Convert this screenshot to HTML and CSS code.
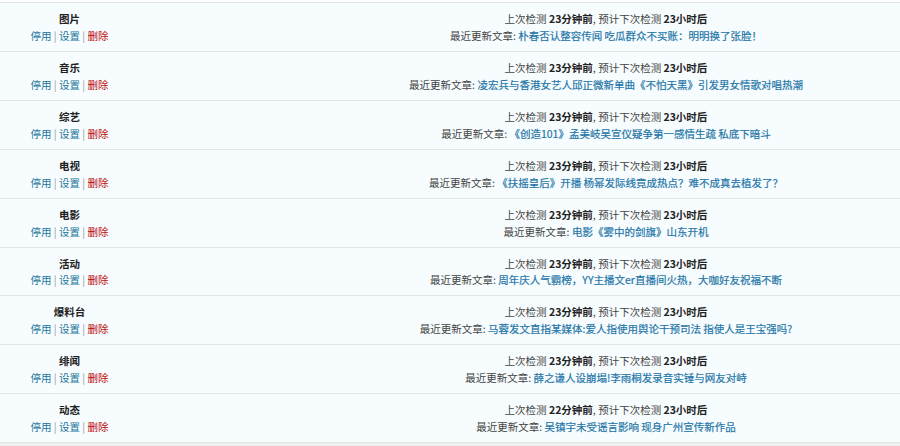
FILE: index.html
```html
<!DOCTYPE html>
<html lang="zh-CN">
<head>
    <meta charset="UTF-8">
    <meta name="viewport" content="width=device-width, initial-scale=1.0">
    <title>采集分类</title>
    <link rel="stylesheet" href="styles.css">
</head>
<body>
    <div class="page">
        <div class="feed-list">

            <div class="feed-row">
                <div class="feed-name">
                    <strong>图片</strong>
                    <div class="row-actions"><a href="#">停用</a> | <a href="#">设置</a> | <a href="#" class="delete">删除</a></div>
                </div>
                <div class="feed-desc"></div>
                <div class="feed-status">
                    <div>上次检测 <b>23分钟前</b>, 预计下次检测 <b>23小时后</b></div>
                    <div>最近更新文章: <a href="#" class="post">朴春否认整容传闻 吃瓜群众不买账：明明换了张脸！</a></div>
                </div>
            </div>

            <div class="feed-row">
                <div class="feed-name">
                    <strong>音乐</strong>
                    <div class="row-actions"><a href="#">停用</a> | <a href="#">设置</a> | <a href="#" class="delete">删除</a></div>
                </div>
                <div class="feed-desc"></div>
                <div class="feed-status">
                    <div>上次检测 <b>23分钟前</b>, 预计下次检测 <b>23小时后</b></div>
                    <div>最近更新文章: <a href="#" class="post">凌宏兵与香港女艺人邱正微新单曲《不怕天黑》引发男女情歌对唱热潮</a></div>
                </div>
            </div>

            <div class="feed-row">
                <div class="feed-name">
                    <strong>综艺</strong>
                    <div class="row-actions"><a href="#">停用</a> | <a href="#">设置</a> | <a href="#" class="delete">删除</a></div>
                </div>
                <div class="feed-desc"></div>
                <div class="feed-status">
                    <div>上次检测 <b>23分钟前</b>, 预计下次检测 <b>23小时后</b></div>
                    <div>最近更新文章: <a href="#" class="post">《创造101》孟美岐吴宣仪疑争第一感情生疏 私底下暗斗</a></div>
                </div>
            </div>

            <div class="feed-row">
                <div class="feed-name">
                    <strong>电视</strong>
                    <div class="row-actions"><a href="#">停用</a> | <a href="#">设置</a> | <a href="#" class="delete">删除</a></div>
                </div>
                <div class="feed-desc"></div>
                <div class="feed-status">
                    <div>上次检测 <b>23分钟前</b>, 预计下次检测 <b>23小时后</b></div>
                    <div>最近更新文章: <a href="#" class="post">《扶摇皇后》开播 杨幂发际线竟成热点？难不成真去植发了？</a></div>
                </div>
            </div>

            <div class="feed-row">
                <div class="feed-name">
                    <strong>电影</strong>
                    <div class="row-actions"><a href="#">停用</a> | <a href="#">设置</a> | <a href="#" class="delete">删除</a></div>
                </div>
                <div class="feed-desc"></div>
                <div class="feed-status">
                    <div>上次检测 <b>23分钟前</b>, 预计下次检测 <b>23小时后</b></div>
                    <div>最近更新文章: <a href="#" class="post">电影《雾中的剑旗》山东开机</a></div>
                </div>
            </div>

            <div class="feed-row">
                <div class="feed-name">
                    <strong>活动</strong>
                    <div class="row-actions"><a href="#">停用</a> | <a href="#">设置</a> | <a href="#" class="delete">删除</a></div>
                </div>
                <div class="feed-desc"></div>
                <div class="feed-status">
                    <div>上次检测 <b>23分钟前</b>, 预计下次检测 <b>23小时后</b></div>
                    <div>最近更新文章: <a href="#" class="post">周年庆人气霸榜，YY主播文er直播间火热，大咖好友祝福不断</a></div>
                </div>
            </div>

            <div class="feed-row">
                <div class="feed-name">
                    <strong>爆料台</strong>
                    <div class="row-actions"><a href="#">停用</a> | <a href="#">设置</a> | <a href="#" class="delete">删除</a></div>
                </div>
                <div class="feed-desc"></div>
                <div class="feed-status">
                    <div>上次检测 <b>23分钟前</b>, 预计下次检测 <b>23小时后</b></div>
                    <div>最近更新文章: <a href="#" class="post">马蓉发文直指某媒体:爱人指使用舆论干预司法 指使人是王宝强吗?</a></div>
                </div>
            </div>

            <div class="feed-row">
                <div class="feed-name">
                    <strong>绯闻</strong>
                    <div class="row-actions"><a href="#">停用</a> | <a href="#">设置</a> | <a href="#" class="delete">删除</a></div>
                </div>
                <div class="feed-desc"></div>
                <div class="feed-status">
                    <div>上次检测 <b>23分钟前</b>, 预计下次检测 <b>23小时后</b></div>
                    <div>最近更新文章: <a href="#" class="post">薛之谦人设崩塌!李雨桐发录音实锤与网友对峙</a></div>
                </div>
            </div>

            <div class="feed-row">
                <div class="feed-name">
                    <strong>动态</strong>
                    <div class="row-actions"><a href="#">停用</a> | <a href="#">设置</a> | <a href="#" class="delete">删除</a></div>
                </div>
                <div class="feed-desc"></div>
                <div class="feed-status">
                    <div>上次检测 <b>22分钟前</b>, 预计下次检测 <b>23小时后</b></div>
                    <div>最近更新文章: <a href="#" class="post">吴镇宇未受谣言影响 现身广州宣传新作品</a></div>
                </div>
            </div>

        </div>
    </div>
</body>
</html>
```

FILE: styles.css
```css
body {
    margin: 0;
    background-color: #f1f1f1;
    font-family: "Noto Sans CJK SC", "Noto Sans", sans-serif;
    font-size: 10.5px;
    color: #333;
}

.page {
    background-color: #fff;
    padding-top: 2px; /* thin white strip above the table */
}

.feed-list {
    border-top: 1px solid #e3e6e8;
    border-bottom: 1px solid #e1e1e1;
    background-color: #f7fcfe;
}

.feed-row {
    display: grid;
    grid-template-columns: 139px 173px 1fr;
    padding: 8px 0 6px;
    line-height: 16.95px;
    border-bottom: 1px solid #e3e6e8;
}

.feed-row:last-child {
    border-bottom: none;
}

.feed-name {
    text-align: center;
}

.feed-name strong {
    color: #222;
}

.row-actions {
    color: #999;
}

a {
    color: #21759b;
    text-decoration: none;
}

a.post {
    color: #1f76a8;
    -webkit-text-stroke: 0.2px #1f76a8; /* titles look a touch heavier */
}

a.delete {
    color: #bc0b0b;
}

.feed-status {
    text-align: center;
    color: #444;
}

.feed-status b {
    color: #222;
}
```
